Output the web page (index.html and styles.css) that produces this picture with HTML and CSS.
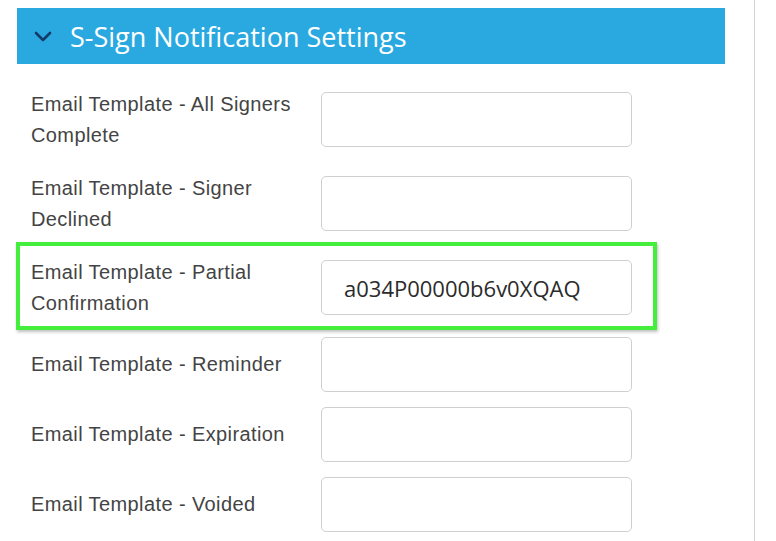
FILE: index.html
```html
<!DOCTYPE html>
<html>
  <head>
    <title>S-Sign Notification Settings</title>
    <link rel="stylesheet" href="styles.css">
  </head>
  <body>
    <div class="panel">
      <div class="section-header">
        <svg class="chevron" width="18" height="11" viewBox="0 0 18 11">
          <path d="M2 2 L9 9 L16 2" fill="none" stroke="#143a6b" stroke-width="2.6" stroke-linecap="round" stroke-linejoin="round"/>
        </svg>
        <span class="section-title">S-Sign Notification Settings</span>
      </div>
      <div class="form">
        <div class="row">
          <label class="label">Email Template - All Signers Complete</label>
          <input class="field" type="text" value="">
        </div>
        <div class="row">
          <label class="label">Email Template - Signer Declined</label>
          <input class="field" type="text" value="">
        </div>
        <div class="row highlighted">
          <label class="label">Email Template - Partial Confirmation</label>
          <input class="field" type="text" value="a034P00000b6v0XQAQ">
        </div>
        <div class="row">
          <label class="label">Email Template - Reminder</label>
          <input class="field" type="text" value="">
        </div>
        <div class="row">
          <label class="label">Email Template - Expiration</label>
          <input class="field" type="text" value="">
        </div>
        <div class="row">
          <label class="label">Email Template - Voided</label>
          <input class="field" type="text" value="">
        </div>
      </div>
    </div>
  </body>
</html>
```

FILE: styles.css
```css
/* page */
body {
  margin: 0;
  background: #fff;
  font-family: "Liberation Sans", Arial, sans-serif;
}
.panel {
  width: 708px;
  min-height: 541px;
  padding: 8px 29px 0 17px;
  border-right: 1px solid #d4d4d4;
  box-sizing: content-box;
}

/* header bar */
.section-header {
  display: flex;
  align-items: center;
  height: 56px;
  background-color: #2aa9e1;
  padding-left: 17px;
}
.chevron {
  display: block;
  margin-right: 18px;
}
.section-title {
  font-family: "Open Sans", sans-serif;
  font-size: 27px;
  color: #fff;
}

/* form rows */
.form {
  padding-top: 21px;
}
.row {
  position: relative;
  display: flex;
  align-items: center;
  padding-left: 14px;
  margin-bottom: 15px;
}
.label {
  width: 275px;
  padding: 3.5px 0;
  font-size: 20px;
  letter-spacing: 0.4px;
  line-height: 31px;
  color: #444;
}
.field {
  box-sizing: border-box;
  width: 311px;
  height: 55px;
  margin-left: 15px;
  padding: 0 22px;
  border: 1px solid #cfcfcf;
  border-radius: 5px;
  font-family: "Open Sans", sans-serif;
  font-size: 22px;
  color: #2b2b2b;
  outline: none;
}
.row.highlighted:after {
  content: '';
  position: absolute;
  left: -1px;
  top: -11px;
  width: 633px;
  height: 80px;
  border: 4px solid #44ee3c;
  box-shadow: 1px 2px 3px rgba(0, 0, 0, 0.25);
  pointer-events: none;
}
```
